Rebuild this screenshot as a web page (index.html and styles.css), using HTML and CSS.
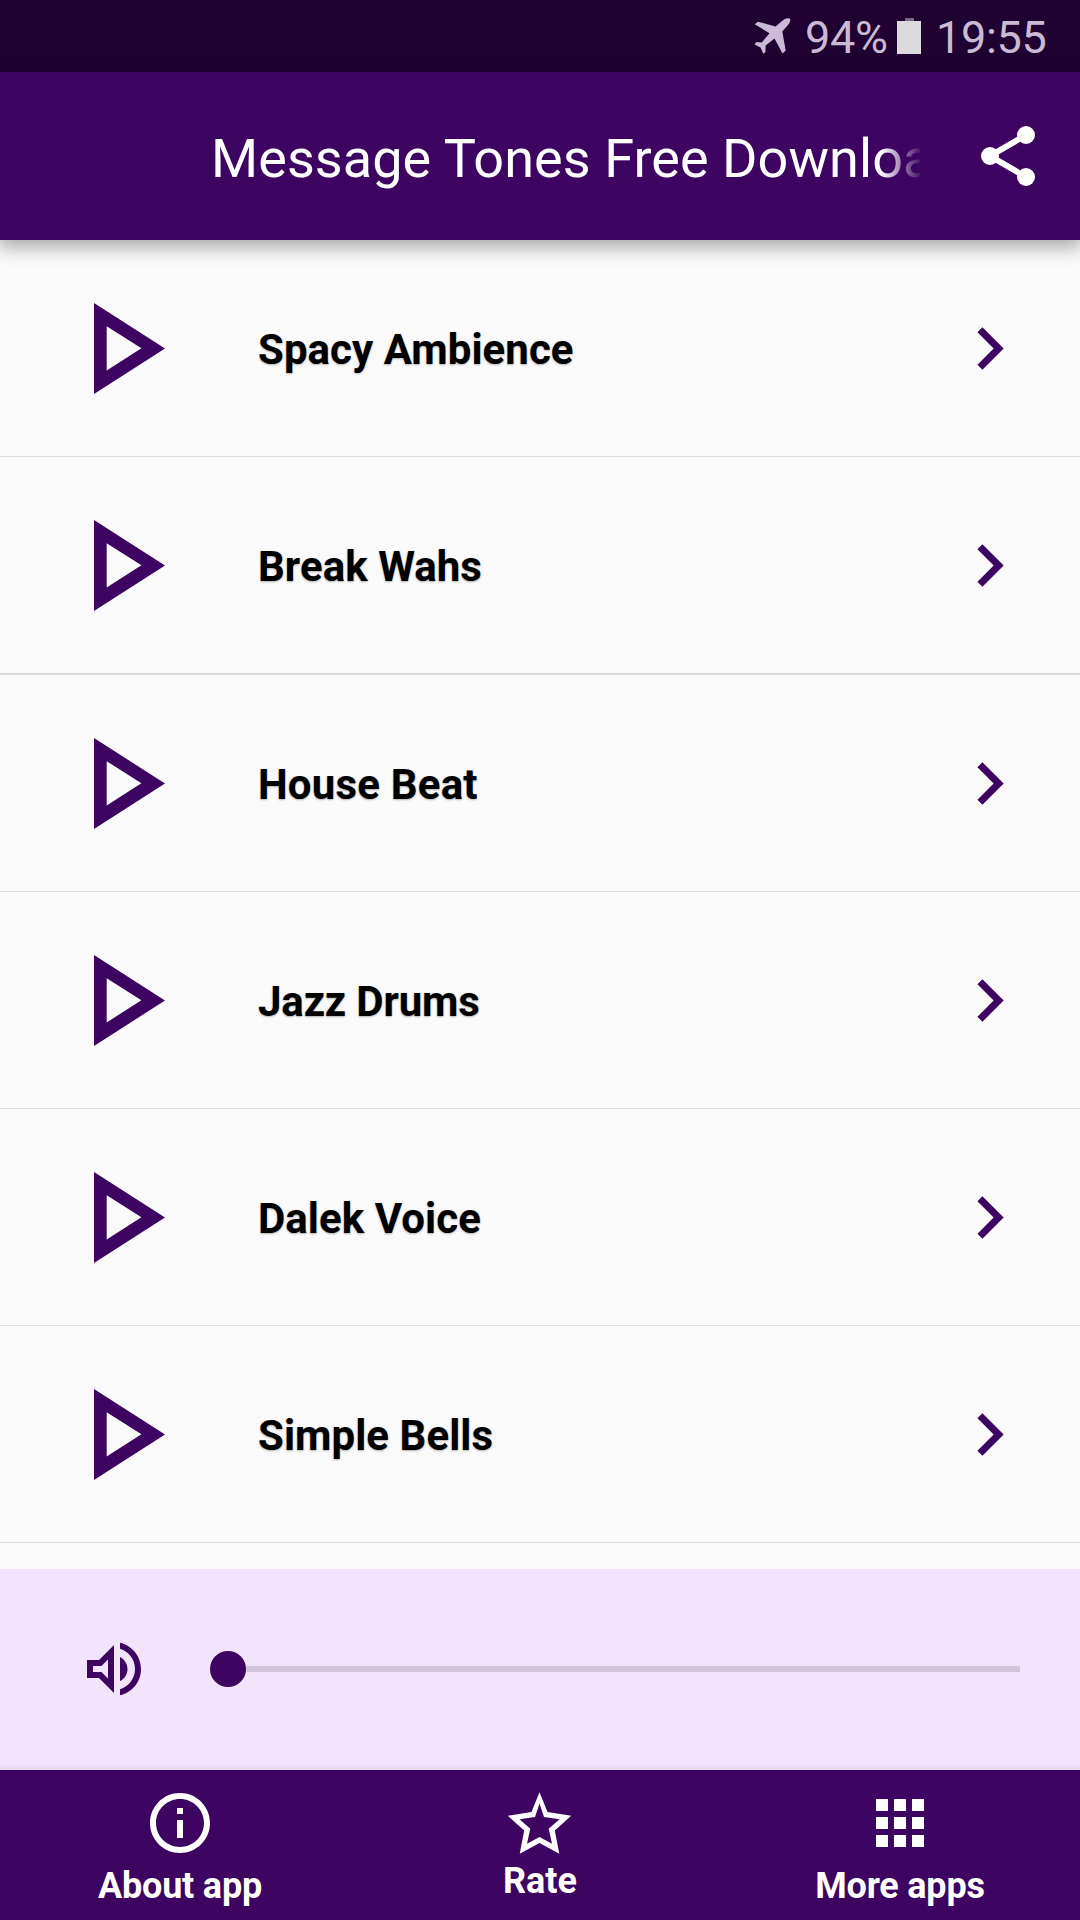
FILE: index.html
```html
<!DOCTYPE html>
<html lang="en">
<head>
<meta charset="utf-8">
<title>Message Tones Free Download</title>
<link rel="stylesheet" href="styles.css">
</head>
<body>
<svg width="0" height="0" class="defs">
  <symbol id="play" viewBox="0 0 71 91"><path fill-rule="evenodd" d="M0 0L71 45.5L0 91ZM12.700 23.200V67.400L47.400 45.300Z"/></symbol>
  <symbol id="chevron" viewBox="0 0 24 24"><path d="M10 6L8.590 7.410 13.170 12l-4.580 4.590L10 18l6-6z"/></symbol>
</svg>
<div class="app">
  <div class="status">
    <svg class="plane" viewBox="0 0 37 36"><path d="M36 .8C34 -.6 31 .6 29 2.200L21.500 8.500L4 3.700L.7 6.200L15.500 15.200L7.800 24.500L2.300 24L.6 26.500L6.500 29.500L9.300 35.700L11.500 34L11.600 27.500L20.500 20.500L28.500 35.500L31.700 32.500L28.300 13.500L34.200 6.800C36 4.500 36.800 2.200 36 .8Z"/></svg>
    <span class="percent">94%</span>
    <span class="battery"></span>
    <span class="clock">19:55</span>
  </div>
  <header class="bar">
    <h1 class="title">Message Tones Free Download</h1>
    <svg class="share" viewBox="0 0 24 24"><circle cx="18" cy="5" r="3"/><circle cx="6" cy="12" r="3"/><circle cx="18" cy="19" r="3"/><path class="links" d="M18 5L6 12L18 19"/></svg>
  </header>
  <main class="list">
    <div class="row"><svg class="play"><use href="#play"/></svg><span class="name">Spacy Ambience</span><svg class="chevron"><use href="#chevron"/></svg></div>
    <div class="row thick"><svg class="play"><use href="#play"/></svg><span class="name">Break Wahs</span><svg class="chevron"><use href="#chevron"/></svg></div>
    <div class="row"><svg class="play"><use href="#play"/></svg><span class="name loose">House Beat</span><svg class="chevron"><use href="#chevron"/></svg></div>
    <div class="row"><svg class="play"><use href="#play"/></svg><span class="name tight">Jazz Drums</span><svg class="chevron"><use href="#chevron"/></svg></div>
    <div class="row"><svg class="play"><use href="#play"/></svg><span class="name">Dalek Voice</span><svg class="chevron"><use href="#chevron"/></svg></div>
    <div class="row"><svg class="play"><use href="#play"/></svg><span class="name">Simple Bells</span><svg class="chevron"><use href="#chevron"/></svg></div>
  </main>
  <section class="volume">
    <svg class="speaker" viewBox="0 0 24 24"><path fill-rule="evenodd" d="M3 9v6h4l5 5V4L7 9H3zm7-.17v6.340L7.830 13H5v-2h2.830L10 8.830zM16.500 12c0-1.770-1.020-3.290-2.500-4.030v8.050c1.480-.73 2.500-2.250 2.500-4.020zM14 3.230v2.060c2.890.86 5 3.540 5 6.710s-2.110 5.850-5 6.710v2.060c4.010-.91 7-4.490 7-8.770s-2.990-7.860-7-8.770z"/></svg>
    <div class="slider"><span class="thumb"></span><span class="track"></span></div>
  </section>
  <nav class="nav">
    <div class="tab"><svg viewBox="0 0 24 24"><path d="M11 7h2v2h-2zm0 4h2v6h-2zm1-9C6.480 2 2 6.480 2 12s4.480 10 10 10 10-4.480 10-10S17.520 2 12 2zm0 18c-4.410 0-8-3.590-8-8s3.590-8 8-8 8 3.590 8 8-3.590 8-8 8z"/></svg><span class="label">About app</span></div>
    <div class="tab rate"><svg viewBox="0 0 72 72"><path fill-rule="evenodd" d="M35.500 5.200L43.500 25L67.200 28.700L50.800 43.500L55.300 66.800L35.500 56L15.700 66.800L20.200 43.500L3.800 28.700L27.500 25ZM35.500 16.500L31 30L15.500 32.300L26.300 41.800L23 56.800L35.500 50L48 56.800L44.700 41.800L55.500 32.300L40 30Z"/></svg><span class="label">Rate</span></div>
    <div class="tab"><svg viewBox="0 0 24 24"><path d="M4 8h4V4H4v4zm6 12h4v-4h-4v4zm-6 0h4v-4H4v4zm0-6h4v-4H4v4zm6 0h4v-4h-4v4zm6-10v4h4V4h-4zm-6 4h4V4h-4v4zm6 6h4v-4h-4v4zm0 6h4v-4h-4v4z"/></svg><span class="label">More apps</span></div>
  </nav>
</div>
</body>
</html>
```
FILE: styles.css
```css
* { box-sizing: border-box; }
body { margin: 0; font-family: Roboto, sans-serif; }
.defs { display: block; height: 0; }
.app { width: 1080px; height: 1920px; display: flex; flex-direction: column; overflow: hidden; background: #fafafa; }
.status { height: 72px; flex: none; display: flex; align-items: flex-start; padding: 18px 33px 0 754px; background: #1f0231; color: #cbbad6; font-size: 45px; line-height: 52px; white-space: nowrap; }
.plane { width: 37px; height: 36px; fill: #cbbad6; flex: none; }
.percent { width: 92px; margin: -6px 0 0 14px; letter-spacing: -.3px; }
.battery { width: 24px; height: 36px; flex: none; background: linear-gradient(#79678a, #79678a) 8px 0 / 9px 3px no-repeat, linear-gradient(#dcd9df, #dcd9df) 0 3px / 24px 33px no-repeat; }
.clock { margin: -6px 0 0 15px; letter-spacing: -.3px; }
.bar { height: 168px; flex: none; display: flex; align-items: center; padding: 0 36px 0 211px; background: #3d0561; box-shadow: 0 5px 18px 2px rgba(0, 0, 0, .34); position: relative; }
.title { width: 709px; margin: 6px 0 0; overflow: hidden; white-space: nowrap; color: #fff; font-size: 54px; font-weight: 400; letter-spacing: .06px; line-height: 72px; -webkit-mask-image: linear-gradient(90deg, #000 670px, transparent 712px); mask-image: linear-gradient(90deg, #000 670px, transparent 712px); }
.share { width: 72px; height: 72px; margin-left: 52px; fill: #fff; }
.links { fill: none; stroke: #fff; stroke-width: 2; }
.list { height: 1329px; flex: none; overflow: hidden; }
.row { height: 217px; display: flex; align-items: center; padding: 0 48px 0 94px; border-bottom: 1px solid #dcdcdc; }
.thick { height: 218px; border-bottom-width: 2px; }
.play { width: 71px; height: 91px; fill: #3d0561; }
.name { margin-left: 93px; flex: 1; color: #000; font-size: 42px; font-weight: 700; letter-spacing: .05px; line-height: 50px; padding-top: 4px; text-shadow: 0 1px 2px rgba(0, 0, 0, .3); }
.loose { letter-spacing: .2px; }
.tight { letter-spacing: -.15px; }
.chevron { width: 85px; height: 85px; fill: #3d0561; }
.volume { height: 201px; flex: none; display: flex; align-items: center; padding: 0 60px 2px 78px; background: linear-gradient(#f2e4fd 195px, #e5d7eb); }
.speaker { width: 72px; height: 72px; fill: #3d0561; }
.slider { flex: 1; margin-left: 60px; display: flex; align-items: center; }
.thumb { width: 36px; height: 36px; border-radius: 50%; background: #3d0561; }
.track { flex: 1; height: 6px; background: #d1c4db; }
.nav { height: 150px; flex: none; display: grid; grid-template-columns: repeat(3, 360px); background: #3d0561; color: #fff; }
.tab { display: flex; flex-direction: column; align-items: center; padding-top: 17px; }
.tab svg { width: 72px; height: 72px; fill: #fff; }
.label { font-size: 36px; font-weight: 700; letter-spacing: -.2px; line-height: 42px; margin-top: 6px; }
.rate .label { margin-top: 1px; letter-spacing: 0; }
```
